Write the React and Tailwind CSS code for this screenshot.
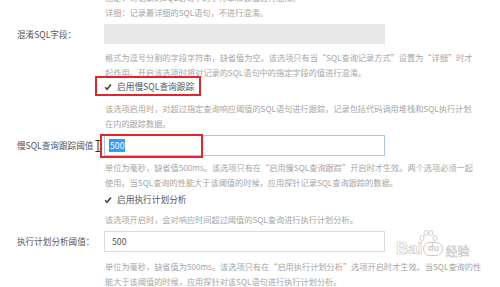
import React from "react";

const font = { fontFamily: '"Noto Sans CJK SC", "Noto Sans", sans-serif' };

function Help({ lines, className = "" }) {
  return (
    <div className={`pl-[105px] text-[8.2px] leading-[15px] text-[#a6a6a6] ${className}`}>
      {lines.map((l, i) => (
        <div key={i} className="whitespace-nowrap">{l}</div>
      ))}
    </div>
  );
}

function Check({ label, className = "" }) {
  return (
    <div className={`flex items-center h-[15px] pl-[104px] ${className}`}>
      <span className="w-[8px] h-[8px] flex items-center justify-center">
        <svg width="8" height="8" viewBox="0 0 8 8">
          <path d="M1.2 4.2 L3.1 6.2 L6.9 1.6" fill="none" stroke="#444" strokeWidth="1.6" />
        </svg>
      </span>
      <span className="ml-[5px] text-[8.7px] text-[#555]">{label}</span>
    </div>
  );
}

function Row({ label, children, className = "" }) {
  return (
    <div className={`flex items-center ${className}`}>
      <div className="w-[104px] pl-[17px] text-[8.6px] text-[#555] whitespace-nowrap">{label}</div>
      {children}
    </div>
  );
}

export default function App() {
  return (
    <div className="relative w-[500px] h-[287px] bg-white overflow-hidden" style={font}>
      <div className="mt-[-10px]">
        <Help lines={["指定：对记录的SQL语句中的字符串和数值进行混淆。", "详细：记录最详细的SQL语句，不进行混淆。"]} />

        <Row label="混淆SQL字段：" className="mt-[4px]">
          <div className="w-[281px] h-[20px] bg-[#e8e8e6]" />
        </Row>

        <Help
          className="mt-[6px]"
          lines={[
            "格式为逗号分割的字段字符串，缺省值为空。该选项只有当“SQL查询记录方式”设置为“详细”时才",
            "起作用。开启该选项时将对记录的SQL语句中的指定字段的值进行混淆。",
          ]}
        />

        <div className="relative">
          <Check label="启用慢SQL查询跟踪" className="mt-[-1px]" />
          <div className="absolute left-[95px] top-[-3px] w-[106px] h-[20px] border-2 border-[#e3242b]" />
        </div>

        <Help
          className="mt-[7px]"
          lines={[
            "该选项启用时，对超过指定查询响应阈值的SQL语句进行跟踪，记录包括代码调用堆栈和SQL执行计划",
            "在内的跟踪数据。",
          ]}
        />

        <Row label="慢SQL查询跟踪阈值" className="mt-[4px] relative">
          <div className="w-[281px] h-[21px] border border-[#a9c6e3] flex items-center pl-[4px]">
            <span className="bg-[#3399ff] text-white text-[8.7px] leading-[13px] px-[1px]">500</span>
          </div>
          <svg className="absolute left-[95px] top-[5px]" width="6" height="12" viewBox="0 0 6 12">
            <path d="M0.5 0.5 H5.5 M3 0.5 V11.5 M0.5 11.5 H5.5" stroke="#333" strokeWidth="1" fill="none" />
          </svg>
          <div className="absolute left-[100px] top-[-1px] w-[103px] h-[24px] border-2 border-[#e3242b]" />
        </Row>

        <Help
          className="mt-[4px]"
          lines={[
            "单位为毫秒，缺省值500ms。该选项只有在“启用慢SQL查询跟踪”开启时才生效。两个选项必须一起",
            "使用。当SQL查询的性能大于该阈值的时候，应用探针记录SQL查询跟踪的数据。",
          ]}
        />

        <Check label="启用执行计划分析" className="mt-[2px]" />

        <Help className="mt-[5px]" lines={["该选项开启时，会对响应时间超过阈值的SQL查询进行执行计划分析。"]} />

        <Row label="执行计划分析阈值：" className="mt-[4px]">
          <div className="w-[281px] h-[21px] border border-[#dcdcdc] flex items-center pl-[7px] text-[8.7px] text-[#555]">
            500
          </div>
        </Row>

        <Help
          className="mt-[7px]"
          lines={[
            "单位为毫秒，缺省值为500ms。该选项只有在“启用执行计划分析”选项开启时才生效。当SQL查询的性",
            "能大于该阈值的时候，应用探针对该SQL语句进行执行计划分析。",
          ]}
        />
      </div>

      {/* watermark */}
      <div className="absolute left-[396px] top-[240px] flex items-end opacity-80">
        <span className="text-[17px] leading-none font-bold text-white" style={{ WebkitTextStroke: "0.7px #bdbdbd", fontFamily: "Liberation Sans, sans-serif" }}>
          Bai
        </span>
        <span className="relative ml-[1px] mb-[1px] w-[20px] h-[14px] rounded-full border border-[#bdbdbd] flex items-center justify-center text-[9px] font-bold text-[#bdbdbd]" style={{ fontFamily: "Liberation Sans, sans-serif" }}>
          du
          <svg className="absolute left-[-6px] top-[-14px]" width="20" height="16" viewBox="0 0 20 16">
            <ellipse cx="4" cy="9" rx="2" ry="2.6" fill="none" stroke="#c4c4c4" />
            <ellipse cx="8" cy="4" rx="2" ry="2.6" fill="none" stroke="#c4c4c4" />
            <ellipse cx="13" cy="4" rx="2" ry="2.6" fill="none" stroke="#c4c4c4" />
            <ellipse cx="17" cy="9" rx="2" ry="2.6" fill="none" stroke="#c4c4c4" />
          </svg>
        </span>
        <span className="ml-[2px] text-[12px] leading-none text-white" style={{ WebkitTextStroke: "0.6px #bdbdbd" }}>
          经验
        </span>
      </div>
    </div>
  );
}
